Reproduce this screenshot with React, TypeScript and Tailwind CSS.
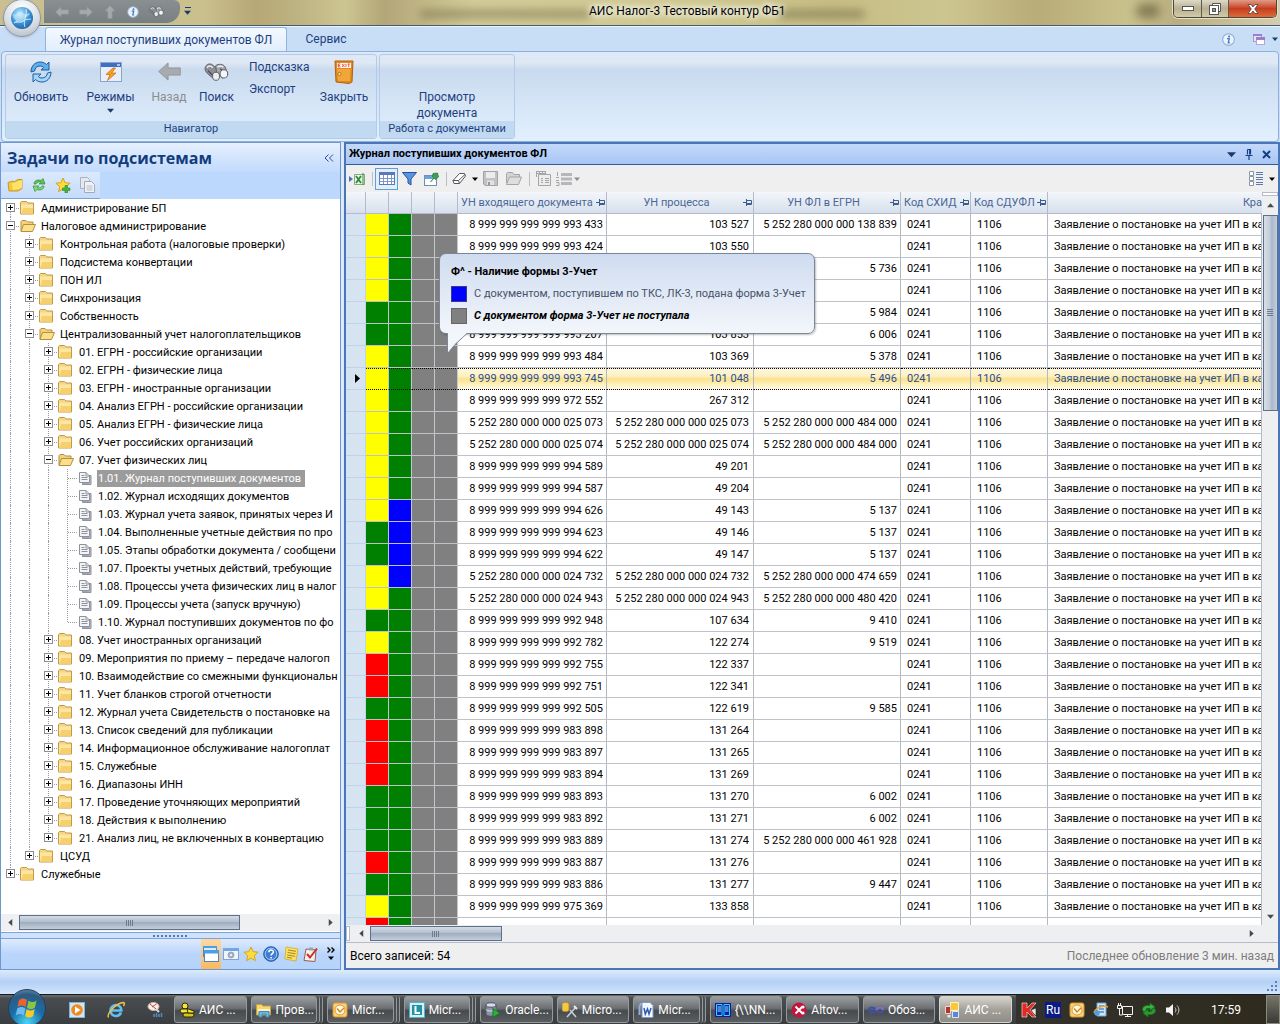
import React from "react";

type P = { children?: React.ReactNode };

/* ---------- small drawing helpers ---------- */

function Svg({ w = 16, h = 16, box, children }: P & { w?: number; h?: number; box?: string }) {
  return (
    <svg width={w} height={h} viewBox={box ?? `0 0 ${w} ${h}`} className="block shrink-0" aria-hidden="true">
      {children}
    </svg>
  );
}

function Caret({ dir = "down", color = "#1b3b6f", size = 7 }: { dir?: "down" | "up" | "left" | "right"; color?: string; size?: number }) {
  const d = { down: "M0 2h8L4 6.5z", up: "M0 6h8L4 1.5z", left: "M6 0v8L1.5 4z", right: "M2 0v8L6.5 4z" }[dir];
  return (
    <Svg w={size} h={size} box="0 0 8 8">
      <path d={d} fill={color} />
    </Svg>
  );
}

function IconButton({ label, className = "", children }: P & { label: string; className?: string }) {
  return (
    <button type="button" aria-label={label} title={label} className={`flex shrink-0 items-center justify-center ${className}`}>
      {children}
    </button>
  );
}

const ArrowShape = ({ dir, fill = "#a4a9ac", size = 14 }: { dir: "left" | "right" | "up"; fill?: string; size?: number }) => {
  const d = {
    left: "M0.5 8 7 2v3.500h8.500v5H7V14z",
    right: "M15.500 8 9 2v3.500H.5v5H9V14z",
    up: "M8 .5 14 7h-3.500v8.500h-5V7H2z",
  }[dir];
  return (
    <Svg w={size} h={size} box="0 0 16 16">
      <path d={d} fill={fill} stroke="#8d9194" strokeWidth=".6" />
    </Svg>
  );
};

const Binoculars = ({ w, h }: { w: number; h: number }) => (
  <Svg w={w} h={h} box="0 0 26 19">
    <path d="M1 5C2 1 6 0 9 2l7 7-5 8C5 13 0 9 1 5z" fill="#8b8f95" stroke="#565a60" strokeWidth=".9" />
    <path d="M12 3c3-2.500 8-2 10 1l3 8-6 4-6-7z" fill="#a3a7ad" stroke="#565a60" strokeWidth=".9" />
    <path d="M3 5c1.500-2.500 4-2.500 6 0M14 4.500c2-2 5-1.500 6 0" stroke="#eceef0" strokeWidth="1.600" fill="none" />
    <path d="M4 8l5 5M17 6l3 3" stroke="#3f4349" strokeWidth="1.200" />
    <ellipse cx="12.500" cy="14" rx="3.700" ry="4.300" fill="#eceef0" stroke="#565a60" />
    <ellipse cx="20.800" cy="11.500" rx="4" ry="4.300" fill="#f5f6f7" stroke="#565a60" />
  </Svg>
);

const InfoBall = ({ size = 13 }: { size?: number }) => (
  <Svg w={size} h={size} box="0 0 14 14">
    <circle cx="7" cy="7" r="6.300" fill="#eaf2fb" stroke="#8fa9cf" strokeWidth="1.100" />
    <circle cx="7.600" cy="3.800" r="1.100" fill="#3f78c4" />
    <path d="M5.500 6h2.300l-1 4.500h1.600" stroke="#3f78c4" strokeWidth="1.400" fill="none" />
  </Svg>
);

const RefreshIcon = () => (
  <Svg w={24} h={24}>
    <path d="M2 12C2 6 6 2 11 2c3 0 5 1 6.500 2.500L20 2v8h-8l2.600-2.600C13.500 6.300 12.500 6 11 6c-3 0-5 2-5.500 5z" fill="#5cb0ec" stroke="#1d5c9e" />
    <path d="M22 12c0 6-4 10-9 10-3 0-5-1-6.500-2.500L4 22v-8h8l-2.600 2.600c1.100 1.100 2.100 1.400 3.600 1.400 3 0 5-2 5.500-5z" fill="#a3d6f8" stroke="#1d5c9e" />
  </Svg>
);

const ModesIcon = () => (
  <Svg w={22} h={20}>
    <rect x=".5" y=".5" width="21" height="19" fill="#e6effa" stroke="#8ba5cf" />
    <path d="M1 1h20v4H1z" fill="#3f6fc4" />
    <path d="M17 2h3v2h-3z" fill="#a9c4f0" />
    <path d="M13 6 6 12.500h4L7.500 18.500 16 11h-4.500L15.500 6z" fill="#f8a21b" stroke="#d4701c" strokeWidth=".8" />
  </Svg>
);

const ExitIcon = () => (
  <Svg w={20} h={24}>
    <path d="M1 1h18l-1 21-3 1.500L2 22z" fill="#e08a1b" stroke="#b2600d" />
    <path d="M3 9h13.500l-.5 12H4z" fill="#f0a63a" />
    <rect x="3" y="3" width="14" height="5" fill="#fff4ec" />
    <path d="M4 4h2.500M4 5.500h2M4 7h2.500M4.200 4v3M8 4l2.500 3M10.500 4 8 7M12 4v3M13.500 4H16M14.700 4v3" stroke="#e0412f" strokeWidth=".8" />
    <circle cx="5.500" cy="14" r="1.600" fill="#fbe08c" stroke="#9b5a10" strokeWidth=".7" />
  </Svg>
);

const Folder = ({ open }: { open?: boolean }) =>
  open ? (
    <Svg w={16} h={14}>
      <path d="M1 12V2.500L2 1.500h4l1.500 1.500H13V5" fill="#f3d27c" stroke="#b58f3d" />
      <path d="M3.500 5.500h12L12.500 12.500H1z" fill="#fbdf8d" stroke="#b58f3d" />
    </Svg>
  ) : (
    <Svg w={15} h={14}>
      <path d="M.5 13V1.500L1.500.5h5L8 2h5.500v11z" fill="#f3d586" stroke="#c49a44" />
      <path d="M1 3.500h12v9H1z" fill="#fce6a2" />
      <path d="M3 7h10v5.500H1.500z" fill="#f6d06c" />
    </Svg>
  );

const DocIcon = () => (
  <Svg w={13} h={13}>
    <path d="M3.500 12.500V11H10V3.500h2v9z" fill="#b9bcc4" stroke="#8e929d" />
    <path d="M.5.500h6.500l3.500 3.500v6.500H.5z" fill="#f3f4f7" stroke="#8e929d" />
    <path d="M7 .5V4h3.500M2.500 3.500h3M2.500 5.500h6M2.500 7.500h6" stroke="#8e929d" fill="none" />
  </Svg>
);

const Star = ({ plus }: { plus?: boolean }) => (
  <Svg w={16} h={16}>
    <path d="m8 1 2.100 4.700 5 .5-3.800 3.400 1.100 5L8 12l-4.400 2.600 1.100-5L.9 6.200l5-.5z" fill="#ffdc3c" stroke="#d9a41a" />
    {plus && <path d="M10 8.500h2.500v2.500H15v2.500h-2.500V16H10v-2.500H7.500V11H10z" fill="#45b53e" stroke="#2c8a28" strokeWidth=".6" />}
  </Svg>
);

const Pin = () => (
  <Svg w={9} h={9}>
    <path d="M0 4.500h3M3.500 1v7M3.500 2.500h5v4h-5M3.500 5.500h5" stroke="#3e5c8c" fill="none" />
  </Svg>
);

/* ---------- title bar and ribbon ---------- */

function TitleBar() {
  return (
    <header className="relative flex h-[26px] shrink-0 border-b border-[#4b5a6b] bg-[linear-gradient(90deg,#c9bf92_0%,#c9c08d_16%,#b7a876_20%,#bdb282_23%,#ccc591_27%,#b3a678_30%,#d2cb98_37%,#cfc88f_55%,#c6bd84_65%,#cdc590_74%,#b8ac78_81%,#c9c18c_88%,#b9ae80_92%,#d3ccb0_100%)]">
      <div className="absolute inset-0 overflow-hidden" aria-hidden="true">
        <div className="absolute left-[420px] top-[10px] h-[8px] w-[170px] bg-[#6a6240]/50 blur-[4px]" />
        <div className="absolute left-[780px] top-[10px] h-[8px] w-[84px] bg-[#6a6240]/55 blur-[4px]" />
        <div className="absolute left-[1136px] top-[4px] h-[14px] w-[24px] rounded-full bg-[#5a5436]/60 blur-[5px]" />
      </div>
      <div className="absolute -top-[1px] left-[3px] z-10 flex size-[38px] items-center justify-center rounded-full border border-[#8b97a6] bg-[radial-gradient(circle_at_50%_25%,#ffffff,#d7dce3_60%,#a9b1bc)] shadow">
        <Svg w={24} h={24}>
          <defs>
            <radialGradient id="orb" cx=".4" cy=".3" r=".8">
              <stop offset="0" stopColor="#c3ecff" />
              <stop offset=".55" stopColor="#3b93d6" />
              <stop offset="1" stopColor="#1c5a9e" />
            </radialGradient>
          </defs>
          <circle cx="12" cy="12" r="11" fill="url(#orb)" />
          <path d="M3 8c3 2 5-3 9-2 2 3 5 2 8 1-1 4-4 3-6 6s-5 1-7 4c-1-4-4-4-4-9z" fill="#d7f2ff" opacity=".55" />
          <path d="M4 17c3-3 6 1 9-2s5-1 8-2M16 3c2 6-4 12-1 18" stroke="#e6f7ff" strokeWidth="1.100" fill="none" opacity=".8" />
        </Svg>
      </div>
      <div className="relative ml-[44px] flex h-[23px] w-[136px] items-center gap-[10px] rounded-br-[14px] rounded-tr-[6px] bg-linear-to-b from-[#8a9091] to-[#787f82] pl-[11px]">
        <IconButton label="Назад"><ArrowShape dir="left" /></IconButton>
        <IconButton label="Вперёд"><ArrowShape dir="right" /></IconButton>
        <IconButton label="Вверх"><ArrowShape dir="up" /></IconButton>
        <IconButton label="Сведения"><InfoBall size={12} /></IconButton>
        <IconButton label="Поиск"><Binoculars w={15} h={11} /></IconButton>
      </div>
      <IconButton label="Настройка панели" className="relative ml-1 h-[22px] flex-col gap-px">
        <span className="h-px w-[6px] bg-[#1b3b6f]" />
        <Caret />
      </IconButton>
      <div className="flex flex-1 justify-center pr-[5px]">
        <h1 className="ml-[178px] flex-1 pl-[220px] text-[12px] leading-[22px] text-black [text-shadow:0_0_6px_#fff,0_0_6px_#fff,0_0_10px_#fff]">
          АИС Налог-3 Тестовый контур ФБ1
        </h1>
      </div>
      <div className="absolute right-[3px] top-0 flex h-[18px] overflow-hidden rounded-b-[5px] border border-t-0 border-[#4c483c] shadow-[0_0_0_1px_#e6e0c6]">
        <IconButton label="Свернуть" className="w-[28px] border-r border-[#5e5a4c] bg-linear-to-b from-[#dfdac9] via-[#b9b092] to-[#d2cba9]">
          <Svg w={12} h={5}><rect x=".5" y=".5" width="11" height="4" fill="#fff" stroke="#555" /></Svg>
        </IconButton>
        <IconButton label="Развернуть" className="w-[27px] border-r border-[#5e5a4c] bg-linear-to-b from-[#dfdac9] via-[#b9b092] to-[#d2cba9]">
          <Svg w={12} h={12}>
            <path d="M3.500.5h8v8h-2v-6h-6z" fill="#fff" stroke="#555" />
            <rect x=".5" y="2.500" width="9" height="9" fill="#fff" stroke="#555" />
            <rect x="3.500" y="5.500" width="3" height="3" fill="#999" stroke="#555" />
          </Svg>
        </IconButton>
        <IconButton label="Закрыть" className="w-[47px] bg-linear-to-b from-[#e09a85] via-[#c63d1e] to-[#dd6a3b]">
          <Svg w={12} h={10}>
            <path d="M1 .5h3l2 2.500L8 .5h3L7.700 5 11 9.500H8L6 7 4 9.500H1L4.300 5z" fill="#fff" stroke="#5b3a33" strokeWidth=".8" />
          </Svg>
        </IconButton>
      </div>
    </header>
  );
}

function RibbonButton({ label, icon, className = "", muted, menu }: { label: string; icon: React.ReactNode; className?: string; muted?: boolean; menu?: boolean }) {
  return (
    <button type="button" className={`flex flex-col items-center ${muted ? "text-[#8d8d8d]" : "text-[#1e3f7f]"} ${className}`}>
      <span className="flex h-[31px] items-center justify-center">{icon}</span>
      <span className="h-[20px] text-[12px] leading-[20px]">{label}</span>
      {menu && <Caret />}
    </button>
  );
}

function Ribbon() {
  return (
    <div className="shrink-0 bg-[#c8def7]">
      <nav className="flex h-[25px] items-end border-t border-[#eaf4ff] text-[12px] text-[#1e3f7f]">
        <button type="button" className="ml-[45px] h-[24px] w-[242px] rounded-t-[3px] border border-b-0 border-[#8fb3e2] bg-linear-to-b from-[#f3f9ff] to-[#e2eefb] leading-[24px]">
          Журнал поступивших документов ФЛ
        </button>
        <button type="button" className="h-[24px] w-[78px] leading-[25px]">Сервис</button>
        <div className="ml-auto flex h-full items-center">
          <IconButton label="О программе" className="mr-[18px]"><InfoBall size={13} /></IconButton>
          <IconButton label="Окна" className="mr-[7px]">
            <Svg w={12} h={11}>
              <rect x=".5" y=".5" width="8" height="7" fill="#e9e4f4" stroke="#a79bc4" />
              <rect x="3.500" y="3.500" width="8" height="7" fill="#fff" stroke="#b6a6d8" />
              <path d="M3 3h9v3H3zM0 0h9v2H0z" fill="#9a7fd0" />
            </Svg>
          </IconButton>
          <IconButton label="Список окон" className="mr-[2px]"><Caret size={6} /></IconButton>
        </div>
      </nav>
      <div className="mx-px flex h-[91px] gap-[2px] rounded-[4px] border border-[#8fb0dc] bg-[linear-gradient(180deg,#dde9f8_0%,#dfe8f4_12%,#c9daee_20%,#d3e3f5_50%,#e2f0fe_100%)] px-[3px] py-[2px]">
        <section className="flex w-[372px] flex-col overflow-hidden rounded-[3px] border border-[#b2cbe9]">
          <div className="flex flex-1 pt-px">
            <RibbonButton label="Обновить" icon={<RefreshIcon />} className="w-[70px]" />
            <RibbonButton label="Режимы" icon={<ModesIcon />} className="w-[69px]" menu />
            <RibbonButton label="Назад" icon={<ArrowShape dir="left" size={23} fill="#a8abae" />} className="w-[48px]" muted />
            <RibbonButton label="Поиск" icon={<Binoculars w={25} h={18} />} className="w-[47px]" />
            <div className="flex w-[78px] flex-col items-start pl-[9px] text-[12px] leading-[22px] text-[#1e3f7f]">
              <button type="button">Подсказка</button>
              <button type="button">Экспорт</button>
            </div>
            <RibbonButton label="Закрыть" icon={<ExitIcon />} className="w-[52px]" />
          </div>
          <h2 className="h-[17px] bg-[#c1d9f1] text-center text-[11px] leading-[15px] text-[#1e3f7f]">Навигатор</h2>
        </section>
        <section className="flex w-[136px] flex-col overflow-hidden rounded-[3px] border border-[#b2cbe9]">
          <div className="flex flex-1 items-end justify-center">
            <button type="button" className="w-[80px] text-[12px] leading-[16px] text-[#1e3f7f]">Просмотр документа</button>
          </div>
          <h2 className="h-[17px] whitespace-nowrap bg-[#c1d9f1] text-center text-[11px] leading-[15px] text-[#1e3f7f]">Работа с документами</h2>
        </section>
      </div>
    </div>
  );
}

/* ---------- task tree ---------- */

type Node = { level: number; text: string; kind: "closed" | "open" | "doc"; last?: boolean; selected?: boolean };

const closed = (level: number, text: string, last = false): Node => ({ level, text, kind: "closed", last });
const opened = (level: number, text: string): Node => ({ level, text, kind: "open" });
const doc = (text: string, last = false, selected = false): Node => ({ level: 3, text, kind: "doc", last, selected });

const tree: Node[] = [
  closed(0, "Администрирование БП"),
  opened(0, "Налоговое администрирование"),
  closed(1, "Контрольная работа (налоговые проверки)"),
  closed(1, "Подсистема конвертации"),
  closed(1, "ПОН ИЛ"),
  closed(1, "Синхронизация"),
  closed(1, "Собственность"),
  opened(1, "Централизованный учет налогоплательщиков"),
  closed(2, "01. ЕГРН - российские организации"),
  closed(2, "02. ЕГРН - физические лица"),
  closed(2, "03. ЕГРН - иностранные организации"),
  closed(2, "04. Анализ ЕГРН - российские организации"),
  closed(2, "05. Анализ ЕГРН - физические лица"),
  closed(2, "06. Учет российских организаций"),
  opened(2, "07. Учет физических лиц"),
  doc("1.01. Журнал поступивших документов", false, true),
  doc("1.02. Журнал исходящих документов"),
  doc("1.03. Журнал учета заявок, принятых через И"),
  doc("1.04. Выполненные учетные действия по про"),
  doc("1.05. Этапы обработки документа / сообщени"),
  doc("1.07. Проекты учетных действий, требующие"),
  doc("1.08. Процессы учета физических лиц в налог"),
  doc("1.09. Процессы учета (запуск вручную)"),
  doc("1.10. Журнал поступивших документов по фо", true),
  closed(2, "08. Учет иностранных организаций"),
  closed(2, "09. Мероприятия по приему – передаче налогоп"),
  closed(2, "10. Взаимодействие со смежными функциональн"),
  closed(2, "11. Учет бланков строгой отчетности"),
  closed(2, "12. Журнал учета Свидетельств о постановке на"),
  closed(2, "13. Список сведений для публикации"),
  closed(2, "14. Информационное обслуживание налогоплат"),
  closed(2, "15. Служебные"),
  closed(2, "16. Диапазоны ИНН"),
  closed(2, "17. Проведение уточняющих мероприятий"),
  closed(2, "18. Действия к выполнению"),
  closed(2, "21. Анализ лиц, не включенных в конвертацию", true),
  closed(1, "ЦСУД", true),
  closed(0, "Служебные", true),
];

function Connector({ node, first }: { node: Node; first: boolean }) {
  const isDoc = node.kind === "doc";
  return (
    <Svg w={19} h={18}>
      <path
        d={`M9.500 ${first ? 9 : 0}V${node.last ? 9 : 18}M${isDoc ? 10 : 15} 9.500H19`}
        stroke="#9a9aa2"
        strokeDasharray="1 1"
        fill="none"
      />
      {!isDoc && (
        <>
          <rect x="5.500" y="4.500" width="8" height="8" fill="#fff" stroke="#8c8c94" />
          <path d={node.kind === "closed" ? "M7 8.500h5M9.500 6v5" : "M7 8.500h5"} stroke="#000" />
        </>
      )}
    </Svg>
  );
}

function TreeRow({ node, first }: { node: Node; first: boolean }) {
  return (
    <li className="flex h-[18px] items-center whitespace-nowrap">
      {Array.from({ length: node.level }, (_, i) => (
        <span key={i} className="flex h-full w-[19px] shrink-0 justify-end">
          <span className="w-[10px] border-l border-dotted border-[#9a9aa2]" />
        </span>
      ))}
      <Connector node={node} first={first} />
      <span className="flex w-[20px] shrink-0">{node.kind === "doc" ? <span className="pl-[2px]"><DocIcon /></span> : <Folder open={node.kind === "open"} />}</span>
      <button type="button" className={`h-[17px] text-[11px] leading-[18px] ${node.selected ? "bg-[#9b9b9b] pl-px pr-[4px] text-white" : "pl-px text-black"}`}>
        {node.text}
      </button>
    </li>
  );
}

function SidePanel() {
  return (
    <aside className="flex w-[341px] shrink-0 flex-col overflow-hidden border border-[#6f97cf] bg-white">
      <div className="flex h-[29px] shrink-0 items-center justify-between bg-linear-to-b from-[#e6f0fe] to-[#c2dafc] pl-[6px] pr-[6px]">
        <h2 className="font-['Open_Sans',sans-serif] text-[16px] font-bold leading-[28px] text-[#123c7c]">Задачи по подсистемам</h2>
        <IconButton label="Свернуть панель">
          <Svg w={10} h={8}><path d="M4.500.5 1 4l3.500 3.500M9 .5 5.500 4 9 7.500" stroke="#26508f" fill="none" /></Svg>
        </IconButton>
      </div>
      <div className="flex h-[27px] shrink-0 bg-[#bdd8fd]">
        <div className="flex w-[99px] items-center gap-2 border-b border-[#7fa2d6] bg-linear-to-b from-[#dbe9fd] to-[#c5dcfb] pl-[6px]">
          <IconButton label="Открыть">
            <Svg>
              <path d="M1 5.500 6 4l1 1 4-2.500h4v9L11 14H2z" fill="#f6c936" stroke="#c9952a" />
              <path d="M5 6.500 15 3v8l-9 2z" fill="#ffe36b" />
            </Svg>
          </IconButton>
          <IconButton label="Обновить">
            <Svg>
              <path d="M3 7c0-3 3-5 7-3.500L12 1.500 14 7H8l2-1.500C8 4.500 5.500 5 5 7z" fill="#5cc255" stroke="#2f8f34" strokeWidth=".7" />
              <path d="M13 9c0 3-3 5-7 3.500l-2 2L2 9h6l-2 1.500c2 1 4.500.5 5-1.500z" fill="#84d977" stroke="#2f8f34" strokeWidth=".7" />
            </Svg>
          </IconButton>
          <IconButton label="В избранное"><Star plus /></IconButton>
          <IconButton label="Копировать">
            <Svg>
              <path d="M1.500.5h7l2 2v9h-9z" fill="#e4e8ef" stroke="#aab2c0" />
              <path d="M5.500 4.500h7l3 3v8h-10z" fill="#f0f2f6" stroke="#a3abba" />
              <path d="M7.500 9h6M7.500 11h6M7.500 13h6" stroke="#b7bdc9" />
            </Svg>
          </IconButton>
        </div>
      </div>
      <ul className="min-h-0 flex-1 overflow-hidden">
        {tree.map((n, i) => (
          <TreeRow key={n.text + i} node={n} first={i === 0} />
        ))}
      </ul>
      <div className="flex h-[17px] shrink-0 items-center bg-[#eef0f2] px-[6px]">
        <Caret dir="left" color="#444a55" />
        <div className="ml-[5px] flex h-[15px] w-[221px] items-center justify-center border border-[#5d6f8c] bg-[linear-gradient(180deg,#d4dbe4,#b3bfce_45%,#9fadc0_50%,#c4cedb)]">
          <span className="h-[6px] w-[8px] bg-[repeating-linear-gradient(90deg,#6d7b90_0_1px,transparent_1px_2px)]" />
        </div>
        <span className="flex-1" />
        <Caret dir="right" color="#444a55" />
      </div>
      <div className="mt-px flex h-[7px] shrink-0 items-center justify-center border-y border-[#7fa2d6] bg-[#cfe2fd]">
        <span className="h-[2px] w-[35px] bg-[repeating-linear-gradient(90deg,#4e79b8_0_2px,transparent_2px_4px)]" />
      </div>
      <div className="flex h-[30px] shrink-0 items-center justify-end bg-linear-to-b from-[#dfebfd] via-[#b9d5fb] to-[#b6d3fb] pr-[2px]">
        <IconButton label="Задачи" className="h-[30px] w-[20px] bg-linear-to-b from-[#fcd9a4] to-[#f9b95f]">
          <Svg>
            <rect x=".5" y=".5" width="13" height="10" fill="#dceafb" stroke="#4a86c8" />
            <rect x="1.500" y="4.500" width="14" height="11" fill="#fff" stroke="#4a86c8" />
            <path d="M1 4h15v3.500H1zM0 0h14v2H0z" fill="#4aa0e4" />
          </Svg>
        </IconButton>
        <IconButton label="Настройки" className="w-[20px]">
          <Svg>
            <rect x=".5" y="2.500" width="15" height="11" fill="#f0f5fc" stroke="#7fa3d4" />
            <path d="M1 3h14v2H1z" fill="#6ba8e8" />
            <circle cx="8" cy="9" r="3" fill="#a8b0c4" stroke="#9aa3ba" />
            <circle cx="8" cy="9" r="1" fill="#fff" />
          </Svg>
        </IconButton>
        <IconButton label="Избранное" className="w-[20px]"><Star /></IconButton>
        <IconButton label="Справка" className="w-[20px]">
          <Svg>
            <circle cx="8" cy="8" r="7.300" fill="#3f7fd2" stroke="#2458a3" />
            <circle cx="8" cy="8" r="5.800" fill="none" stroke="#b9d6f7" strokeWidth=".8" />
            <path d="M5.800 6.300c0-3 4.600-3 4.600-.3 0 1.600-2.300 1.700-2.300 3.500M8.100 11v1.500" stroke="#fff" strokeWidth="1.500" fill="none" />
          </Svg>
        </IconButton>
        <IconButton label="Заметки" className="w-[19px]">
          <Svg>
            <path d="m3 1 12 2-2 12-11-2z" fill="#fbe25c" stroke="#d1ab2a" strokeWidth=".8" />
            <path d="m5 4 8 1.300M4.600 6.500l8 1.300M4.200 9l8 1.300M4 11.300l5 .8" stroke="#a8862a" />
          </Svg>
        </IconButton>
        <IconButton label="Задания" className="w-[21px]">
          <Svg>
            <path d="m3 3 10 1-1 11.500-11-1z" fill="#f3f1ee" stroke="#9b5a4a" />
            <path d="M6 1.500h4v3H6z" fill="#9aa2ad" />
            <path d="m4 8 3 3.500L14 2.500" stroke="#cf2e24" strokeWidth="2" fill="none" />
          </Svg>
        </IconButton>
        <IconButton label="Ещё" className="ml-[3px] w-[14px] flex-col gap-[2px]">
          <Svg w={8} h={6}><path d="M.5.500 3 3 .5 5.500M4.500.5 7 3 4.500 5.500" stroke="#000" strokeWidth="1.400" fill="none" /></Svg>
          <Caret color="#000" size={6} />
        </IconButton>
      </div>
    </aside>
  );
}

/* ---------- document journal ---------- */

type Row = { c: string; b?: boolean; doc: string; proc: string; egrn?: string; current?: boolean; covered?: boolean };

const n9 = (tail: string) => `8 999 999 999 999 ${tail}`;
const n5 = (tail: string) => `5 252 280 000 000 ${tail}`;

const rows: Row[] = [
  { c: "y", doc: n9("993 433"), proc: "103 527", egrn: n5("138 839") },
  { c: "y", doc: n9("993 424"), proc: "103 550" },
  { c: "y", doc: "", proc: "", egrn: "5 736", covered: true },
  { c: "y", doc: "", proc: "", covered: true },
  { c: "g", doc: "", proc: "", egrn: "5 984", covered: true },
  { c: "g", doc: n9("993 207"), proc: "103 853", egrn: "6 006" },
  { c: "y", doc: n9("993 484"), proc: "103 369", egrn: "5 378" },
  { c: "y", doc: n9("993 745"), proc: "101 048", egrn: "5 496", current: true },
  { c: "y", doc: n9("972 552"), proc: "267 312" },
  { c: "y", doc: n5("025 073"), proc: n5("025 073"), egrn: n5("484 000") },
  { c: "y", doc: n5("025 074"), proc: n5("025 074"), egrn: n5("484 000") },
  { c: "y", doc: n9("994 589"), proc: "49 201" },
  { c: "y", doc: n9("994 587"), proc: "49 204" },
  { c: "y", b: true, doc: n9("994 626"), proc: "49 143", egrn: "5 137" },
  { c: "g", b: true, doc: n9("994 623"), proc: "49 146", egrn: "5 137" },
  { c: "g", b: true, doc: n9("994 622"), proc: "49 147", egrn: "5 137" },
  { c: "y", b: true, doc: n5("024 732"), proc: n5("024 732"), egrn: n5("474 659") },
  { c: "y", doc: n5("024 943"), proc: n5("024 943"), egrn: n5("480 420") },
  { c: "g", doc: n9("992 948"), proc: "107 634", egrn: "9 410" },
  { c: "y", doc: n9("992 782"), proc: "122 274", egrn: "9 519" },
  { c: "r", doc: n9("992 755"), proc: "122 337" },
  { c: "r", doc: n9("992 751"), proc: "122 341" },
  { c: "g", doc: n9("992 505"), proc: "122 619", egrn: "9 585" },
  { c: "r", doc: n9("983 898"), proc: "131 264" },
  { c: "r", doc: n9("983 897"), proc: "131 265" },
  { c: "r", doc: n9("983 894"), proc: "131 269" },
  { c: "g", doc: n9("983 893"), proc: "131 270", egrn: "6 002" },
  { c: "g", doc: n9("983 892"), proc: "131 271", egrn: "6 002" },
  { c: "g", doc: n9("983 889"), proc: "131 274", egrn: n5("461 928") },
  { c: "r", doc: n9("983 887"), proc: "131 276" },
  { c: "g", doc: n9("983 886"), proc: "131 277", egrn: "9 447" },
  { c: "y", doc: n9("975 369"), proc: "133 858" },
  { c: "r", doc: "", proc: "" },
];

const fills: Record<string, string> = { y: "bg-[#ffff00]", g: "bg-[#008000]", r: "bg-[#ff0000]" };

function DocRow({ row }: { row: Row }) {
  const line = row.current ? "border-y border-y-black [border-top-style:dotted] [border-bottom-style:dotted]" : "border-b border-b-[#bfc3c9]";
  const mark = `h-[22px] border-r border-r-[#c4c8cc] ${line}`;
  const cell = `h-[22px] overflow-hidden border-r border-r-[#b4b8c0] px-[3px] ${line} ${
    row.current ? "bg-[linear-gradient(180deg,#fdf6de_0%,#fdf0c4_35%,#fbe28c_50%,#fdf0b8_75%,#fdf8e2_100%)] text-[#2a4f8f]" : "bg-white"
  }`;
  const filled = row.doc !== "" || row.covered;
  return (
    <tr>
      <td className="h-[22px] border-b border-r border-[#c3d3e6] bg-[#d6e4f2]">
        {row.current && <span className="flex justify-center pl-[3px]"><Svg w={5} h={9}><path d="M0 0v9l5-4.500z" /></Svg></span>}
      </td>
      <td className={`${mark} ${fills[row.c]}`} />
      <td className={`${mark} ${row.b ? "bg-[#0000ff]" : "bg-[#008000]"}`} />
      <td className={`${mark} bg-[#808080]`} />
      <td className={`${mark} bg-[#808080]`} />
      <td className={`${cell} text-right`}>{row.doc}</td>
      <td className={`${cell} pr-[4px] text-right`}>{row.proc}</td>
      <td className={`${cell} text-right`}>{row.egrn}</td>
      <td className={`${cell} pl-[6px]`}>{filled && "0241"}</td>
      <td className={`${cell} pl-[6px]`}>{filled && "1106"}</td>
      <td className={`${cell} pl-[6px]`}>{filled && "Заявление о постановке на учет ИП в ка"}</td>
    </tr>
  );
}

function HeadCell({ text, align = "justify-center" }: { text: string; align?: string }) {
  return (
    <th className="h-[22px] overflow-hidden border-b border-r border-[#b4bccb] p-0 font-normal text-[#4a6796]">
      <div className="flex items-center pl-[3px] pr-px">
        <span className={`flex flex-1 ${align}`}>{text}</span>
        <Pin />
      </div>
    </th>
  );
}

function Tooltip() {
  return (
    <div role="tooltip" className="absolute left-[93px] top-[61px] w-[376px] whitespace-nowrap rounded-[7px] border border-[#7b8797] bg-linear-to-b from-[#cfdcf0] to-[#f3f6fb] pb-[6px] pl-[11px] pt-[7px] text-[11px] shadow-[1px_1px_2px_rgba(0,0,0,0.25)]">
      <div className="h-[22px] font-bold leading-[22px] text-black">Ф^ - Наличие формы 3-Учет</div>
      <div className="flex h-[22px] items-center text-[#46536b]">
        <span className="mr-[7px] size-[16px] shrink-0 border border-[#3a3a8c] bg-[#0000ff]" />С документом, поступившем по ТКС, ЛК-3, подана форма 3-Учет
      </div>
      <div className="flex h-[22px] items-center font-bold italic text-black">
        <span className="mr-[7px] size-[16px] shrink-0 border border-[#666] bg-[#808080]" />С документом форма 3-Учет не поступала
      </div>
      <div className="absolute left-[7px] top-full">
        <Svg w={24} h={22}>
          <path d="M.5-1V20.500L8 11.500 21-1z" fill="#f3f6fb" />
          <path d="M.5 0V20.500L8 11.500 20 .5" fill="none" stroke="#7b8797" />
        </Svg>
      </div>
    </div>
  );
}

function Separator() {
  return <span className="h-[14px] w-px bg-[#b9bdc4]" />;
}

function Toolbar() {
  return (
    <div className="flex h-[27px] shrink-0 items-center bg-[#efefef] pl-[3px]">
      <IconButton label="Экспорт в Excel">
        <Svg w={17} h={14}>
          <path d="M0 4v6l4-3z" fill="#4b6fb4" />
          <path d="M13 2.500H8L5 5" fill="none" stroke="#5c9a5c" />
          <path d="M5.500 2.500h10v10h-10z" fill="#edf6eb" stroke="#7fae7b" />
          <path d="m7 4 5 7M12 4 7 11" stroke="#2f8a35" strokeWidth="1.800" />
          <path d="M14 1v12" stroke="#2f8a35" />
        </Svg>
      </IconButton>
      <span className="w-[6px]" /><Separator />
      <IconButton label="Таблица" className="ml-[2px] h-[22px] w-[23px] border border-[#5d9fd6] bg-[#e2effb]">
        <Svg w={16} h={13}>
          <rect x=".5" y=".5" width="15" height="12" fill="#fff" stroke="#5b79b8" />
          <path d="M1 1h14v2H1z" fill="#5b79b8" />
          <path d="M1 6.500h14M1 9.500h14M4.500 3v9M8.500 3v9M12.500 3v9" stroke="#7f97c8" />
        </Svg>
      </IconButton>
      <IconButton label="Фильтр" className="ml-[4px]">
        <Svg w={15} h={14}><path d="M.5.500h14L9 7v6L6 11V7z" fill="#5b93e0" stroke="#23539f" /></Svg>
      </IconButton>
      <IconButton label="Закрепить" className="ml-[7px]">
        <Svg w={15} h={14}>
          <rect x=".5" y="3.500" width="12" height="10" fill="#fff" stroke="#6f8fb8" />
          <path d="M1 4h8v3H1z" fill="#6aa3d6" />
          <path d="M9 1.500 13.500 1l1 4-3 2.500-3-3z" fill="#3fa04e" stroke="#23733a" strokeWidth=".7" />
          <path d="m10 6-3.500 4" stroke="#23733a" />
        </Svg>
      </IconButton>
      <span className="w-[7px]" /><Separator />
      <IconButton label="Очистить" className="ml-[5px]">
        <Svg w={15} h={13}>
          <path d="M1 8.500 7.500 1.500h5L13.500 4 7.500 11.500H2z" fill="#fff" stroke="#55585e" />
          <path d="M1 8.500h5.500L13 2.500M6.500 8.500l1 3" stroke="#55585e" fill="none" />
        </Svg>
      </IconButton>
      <IconButton label="Варианты очистки" className="ml-[5px]"><Caret color="#000" size={6} /></IconButton>
      <IconButton label="Сохранить" className="ml-[5px]">
        <Svg w={15} h={15}>
          <path d="M.5.500h14v14H2l-1.500-1.500z" fill="#c0c2c5" stroke="#a0a2a6" />
          <path d="M3 1h9v6H3z" fill="#ececec" /><path d="M4 9.500h7V14H4z" fill="#e2e2e2" /><path d="M5 11h2v3H5z" fill="#96989c" />
        </Svg>
      </IconButton>
      <IconButton label="Открыть" className="ml-[8px]">
        <Svg w={16} h={13}>
          <path d="M.5 11V1.500L1.500.5h5L8 2.500h5.500V5" fill="#d3d3d3" stroke="#a3a5a8" />
          <path d="M3.500 5h12l-3 7.500h-12z" fill="#dedede" stroke="#a3a5a8" />
        </Svg>
      </IconButton>
      <span className="w-[7px]" /><Separator />
      <IconButton label="Свойства" className="ml-[6px]">
        <Svg w={16} h={15}>
          <path d="M2.500 3.500h12v11h-12z" fill="#ececec" stroke="#a3a5a8" />
          <path d="M0 .5h10M0 2.500h10M.5 0v6M3.500 0v4M6.500 0v4M9.500 0v4M5 7.500h2M9 7.500h4M5 9.500h2M9 9.500h4M5 11.500h2M9 11.500h4" stroke="#a3a5a8" />
        </Svg>
      </IconButton>
      <IconButton label="Нумерация" className="ml-[4px]">
        <Svg w={16} h={14}>
          <path d="M5 1h11v3H5zM5 5.500h11v3H5zM5 10h11v3H5z" fill="#b5b7ba" />
          <path d="M1.500 0v4M0 5.500h3M0 8.500h3M0 10.500h3v3H0" stroke="#a3a5a8" fill="none" />
        </Svg>
      </IconButton>
      <IconButton label="Варианты нумерации" className="ml-[2px]"><Caret color="#8b8d90" size={6} /></IconButton>
      <IconButton label="Вид" className="ml-auto">
        <Svg w={14} h={16}>
          <path d="M.5.500h4v4h-4zM.5 5.500h4v4h-4zM.5 10.500h4v4h-4z" fill="#fff" stroke="#8b95a8" />
          <path d="M7 1.500h7M7 3.500h7M7 6.500h7M7 8.500h7M7 11.500h7M7 13.500h7" stroke="#5d79ad" />
        </Svg>
      </IconButton>
      <IconButton label="Варианты вида" className="ml-[6px] mr-[3px]"><Caret color="#000" size={6} /></IconButton>
    </div>
  );
}

function Journal() {
  return (
    <main className="flex min-w-0 flex-1 flex-col overflow-hidden border-2 border-[#4a76b8] bg-[#efefef]">
      <div className="flex h-[21px] shrink-0 items-center border-b border-[#2f5a9c] bg-linear-to-b from-[#c3d9fb] to-[#a9c6f4] pl-[3px] pr-[7px]">
        <h2 className="text-[11px] font-bold text-black">Журнал поступивших документов ФЛ</h2>
        <div className="ml-auto flex items-center gap-[9px]">
          <IconButton label="Меню окна"><Caret size={9} /></IconButton>
          <IconButton label="Закрепить окно">
            <Svg w={8} h={11}><path d="M2.500.5h3v5M2.500.5v5M4.700.5v5M.5 6.500h7M4 7v4" stroke="#123f85" strokeWidth="1.200" fill="none" /></Svg>
          </IconButton>
          <IconButton label="Закрыть окно">
            <Svg w={9} h={9}><path d="m1 1 7 7M8 1 1 8" stroke="#123f85" strokeWidth="2" /></Svg>
          </IconButton>
        </div>
      </div>
      <Toolbar />
      <div className="relative flex min-h-0 flex-1">
        <div className="min-w-0 flex-1 overflow-hidden bg-white">
          <table className="w-full table-fixed border-separate border-spacing-0 whitespace-nowrap text-[11px] leading-[18px] text-black">
            <colgroup>
              <col className="w-[20px]" />
              <col className="w-[23px]" />
              <col className="w-[23px]" />
              <col className="w-[23px]" />
              <col className="w-[23px]" />
              <col className="w-[149px]" />
              <col className="w-[147px]" />
              <col className="w-[147px]" />
              <col className="w-[70px]" />
              <col className="w-[77px]" />
              <col />
            </colgroup>
            <thead className="bg-linear-to-b from-[#f3f6fa] to-[#d5dfec]">
              <tr>
                {["Указатель", "Состояние", "Проверка", "Признак", "Форма"].map((t) => (
                  <th key={t} aria-label={t} className="h-[22px] border-b border-r border-[#b4bccb] p-0" />
                ))}
                <HeadCell text="УН входящего документа" align="justify-start" />
                <HeadCell text="УН процесса" />
                <HeadCell text="УН ФЛ в ЕГРН" />
                <HeadCell text="Код СХИД" align="justify-start" />
                <HeadCell text="Код СДУФЛ" align="justify-start" />
                <th className="overflow-hidden border-b border-[#b4bccb] p-0 text-right font-normal text-[#4a6796]">Кра</th>
              </tr>
            </thead>
            <tbody>
              {rows.map((r, i) => (
                <DocRow key={i} row={r} />
              ))}
            </tbody>
          </table>
        </div>
        <div className="flex w-[16px] shrink-0 flex-col items-center bg-[#eeeff1]">
          <span className="h-[4px] w-full border border-[#b4bccb] bg-white" />
          <span className="flex h-[19px] items-center"><Caret dir="up" color="#444a55" /></span>
          <div className="flex h-[196px] w-[15px] items-center justify-center border border-[#5d6f8c] bg-[linear-gradient(90deg,#d8dfe8,#c3ccda_45%,#aab8cb_60%,#c4cedb)]">
            <span className="h-[8px] w-[6px] bg-[repeating-linear-gradient(180deg,#6d7b90_0_1px,transparent_1px_2px)]" />
          </div>
          <span className="mt-auto flex h-[18px] items-center"><Caret dir="down" color="#444a55" /></span>
        </div>
        <Tooltip />
      </div>
      <div className="flex h-[17px] shrink-0 items-center bg-[#eeeff1]">
        <span className="h-[15px] w-[4px] border border-[#b4bccb] bg-white" />
        <span className="ml-[8px]"><Caret dir="left" color="#444a55" /></span>
        <div className="ml-[5px] flex h-[15px] w-[132px] items-center justify-center border border-[#5d6f8c] bg-[linear-gradient(180deg,#d4dbe4,#b3bfce_45%,#9fadc0_50%,#c4cedb)]">
          <span className="h-[6px] w-[8px] bg-[repeating-linear-gradient(90deg,#6d7b90_0_1px,transparent_1px_2px)]" />
        </div>
        <span className="ml-auto mr-[23px]"><Caret dir="right" color="#444a55" /></span>
      </div>
      <footer className="flex h-[26px] shrink-0 items-center justify-between border-t border-[#b4bccb] px-[4px] text-[12px]">
        <span className="text-black">Всего записей: 54</span>
        <span className="text-[#7d7d7d]">Последнее обновление 3 мин. назад</span>
      </footer>
    </main>
  );
}

/* ---------- desktop task bar ---------- */

const OutlookIcon = () => (
  <Svg>
    <rect x="1" y="1" width="14" height="14" rx="2" fill="#f8cf7c" stroke="#d9982c" />
    <circle cx="8" cy="8" r="5" fill="#fff7e2" stroke="#e09a26" />
    <path d="M5 6.500 8 10l4-4" stroke="#c9851d" strokeWidth="1.300" fill="none" />
  </Svg>
);

const taskIcons: Record<string, React.ReactNode> = {
  key: (
    <Svg>
      <circle cx="6" cy="4" r="3" fill="#f5e53a" stroke="#2c2a08" />
      <rect x="1" y="7" width="9" height="4" rx="2" fill="#f5e53a" stroke="#2c2a08" />
      <rect x="4" y="11" width="11" height="4" rx="2" fill="#d9c61d" stroke="#2c2a08" />
      <path d="M8 6.500 15 9v2H9z" fill="#f5e53a" stroke="#2c2a08" />
    </Svg>
  ),
  explorer: (
    <Svg>
      <path d="M.5 13V2.500h5L7 4h7.500v9z" fill="#f6d774" stroke="#c9a040" />
      <path d="M2 7h12v3H2z" fill="#fff2bf" />
      <path d="M3 15V9.500h10V15h-3v-3H6v3z" fill="#6db9e8" stroke="#3f88bf" />
    </Svg>
  ),
  outlook: <OutlookIcon />,
  lync: (
    <Svg>
      <rect x=".5" y=".5" width="15" height="15" fill="#d7eef2" stroke="#4fb4c6" />
      <path d="M3 3h10v10H3z" fill="#2292a8" />
      <path d="M6.500 4v7h4.500" stroke="#fff" strokeWidth="2" fill="none" />
    </Svg>
  ),
  oracle: (
    <Svg>
      <path d="M1 3v9c0 3 10 3 10 0V3z" fill="#8c93a8" stroke="#4d5268" />
      <ellipse cx="6" cy="3" rx="5" ry="2.200" fill="#d8dce8" stroke="#4d5268" />
      <path d="M1 7.500c0 2 10 2 10 0" stroke="#e2e5ee" fill="none" />
      <path d="M8 6.500v9l7-4.500z" fill="#2fae3b" stroke="#17752a" />
    </Svg>
  ),
  tools: (
    <Svg>
      <path d="M0 2c0-2 7-2 7 0v6c0 2-7 2-7 0z" fill="#f2c84b" stroke="#b88c20" />
      <path d="M5 15 14 5M14 15 8 8" stroke="#c6ccd4" strokeWidth="1.600" />
      <path d="m12 4 3 3" stroke="#e8ecf0" strokeWidth="2" />
    </Svg>
  ),
  word: (
    <Svg>
      <path d="M4 .5h8l3 3v12H4z" fill="#f4f7fc" stroke="#7c98c8" />
      <path d="M1 5c2-2 2-3 2-4M1.500 5v8" stroke="#8fb0e4" strokeWidth="2" fill="none" />
      <path d="m6 6 1.300 6L9.500 7l1.500 5 2-6" stroke="#2f5cb0" strokeWidth="1.500" fill="none" />
    </Svg>
  ),
  far: (
    <Svg>
      <path d="M0 1h16v14H0z" fill="#0b1aa8" />
      <path d="M1.500 2.500h5.500v11H1.500zM9 2.500h5.500v11H9z" fill="none" stroke="#35d8f0" />
      <path d="M2.500 5h3.500M2.500 7h3.500M2.500 9h3.500M10 5h3.500M10 7h3.500M10 9h3.500" stroke="#8ff0ff" />
    </Svg>
  ),
  altova: (
    <Svg>
      <circle cx="8" cy="8" r="7.500" fill="#c4143c" />
      <path d="m4.500 4.500 7 7M11.500 4.500l-7 7" stroke="#fff" strokeWidth="2" />
      <circle cx="12" cy="5" r="1.600" fill="#fff" /><circle cx="12" cy="11" r="1.600" fill="#fff" />
    </Svg>
  ),
  vs: (
    <Svg>
      <path d="M8 8C6 4.500 1 5 1 8s5 3.500 7 0 7-3 7 0-5 3.500-7 0z" fill="none" stroke="#3c52a8" strokeWidth="2" />
      <path d="M8 8c2-3.500 7-3 7 0" fill="none" stroke="#8c6cc0" strokeWidth="2" />
    </Svg>
  ),
  app: (
    <Svg>
      <path d="M6.500.5h8v8h-8z" fill="#f7c838" stroke="#fff3c4" />
      <path d="M1.500 4.500h5v7h-5z" fill="#b3372c" stroke="#f3d4d0" />
      <path d="M8.500 9.500h6v6h-6z" fill="#5a86d8" stroke="#dce6f8" />
      <path d="M3.500 13h3v2.500h-3z" fill="#e9e9e9" />
    </Svg>
  ),
};

const tasks = [
  { icon: "key", text: "АИС ..." },
  { icon: "explorer", text: "Пров...", stack: true },
  { icon: "outlook", text: "Micr...", stack: true },
  { icon: "lync", text: "Micr...", stack: true },
  { icon: "oracle", text: "Oracle..." },
  { icon: "tools", text: "Micro..." },
  { icon: "word", text: "Micr...", stack: true },
  { icon: "far", text: "{\\\\NN..." },
  { icon: "altova", text: "Altov..." },
  { icon: "vs", text: "Обоз..." },
  { icon: "app", text: "АИС ...", active: true },
];

function TaskBar() {
  return (
    <footer className="flex h-[30px] shrink-0 border-t border-[#17191c] bg-[linear-gradient(180deg,#6a6d6f_0%,#4a4d4f_12%,#3a3d3f_100%)] text-[12px] text-white">
      <div className="relative w-[56px] shrink-0">
        <button type="button" aria-label="Пуск" className="absolute -top-[6px] left-[8px] size-[38px] rounded-full border border-[#20405c] bg-[radial-gradient(circle_at_50%_90%,#49d5f5,#1c6ca6_45%,#2c5b82_75%,#7fa3bf)]">
          <Svg w={36} h={36}>
            <path d="M10 10c3-2 5-2 8 0l-1.500 7c-3-2-5-2-8 0z" fill="#f0622b" />
            <path d="M19.500 10.500c3 2 5 2 8 0L26 17.500c-3 2-5 2-8 0z" fill="#8cc63e" />
            <path d="M8.200 18.500c3-2 5-2 8 0L14.700 25.500c-3-2-5-2-8 0z" fill="#6dbcf2" />
            <path d="M17.700 19c3 2 5 2 8 0L24.200 26c-3 2-5 2-8 0z" fill="#fbc926" />
          </Svg>
        </button>
      </div>
      <div className="flex w-[118px] shrink-0 items-center gap-[22px] pl-[13px]">
        <IconButton label="Проигрыватель">
          <Svg>
            <rect x=".5" y=".5" width="15" height="15" fill="#cfe6f5" stroke="#7fb2d6" />
            <circle cx="8" cy="8" r="5.800" fill="#f18a1f" />
            <path d="M6 4.500v7L11.500 8z" fill="#fff" />
          </Svg>
        </IconButton>
        <IconButton label="Браузер">
          <Svg w={18} h={18}>
            <path d="M14 11.500C13 14 11 15 9 15c-3.500 0-5.500-2.500-5.500-5.500S6 4 9 4s5.500 2.500 5.300 5.500H5" fill="none" stroke="#5fc0f3" strokeWidth="2.600" />
            <path d="M1.500 16.500C-.5 13 8 3 16 1.500c2 0 1.500 2 .5 3.500" fill="none" stroke="#f4c43c" strokeWidth="1.400" />
          </Svg>
        </IconButton>
        <IconButton label="Монитор">
          <Svg>
            <ellipse cx="6.500" cy="4.500" rx="5.500" ry="4" fill="#f5f1ee" stroke="#d8b0a8" />
            <path d="m3 2 6 5M9.500 2 5 5" stroke="#c24c3d" />
            <path d="m9 7 3 3" stroke="#d8d8d8" strokeWidth="2" />
            <path d="M7 15v-3M9.500 15v-4M12 15v-3M14.500 15v-4" stroke="#4f8fc0" strokeWidth="1.500" />
          </Svg>
        </IconButton>
      </div>
      <div className="grid min-w-0 flex-1 grid-cols-11">
        {tasks.map((t, i) => (
          <div key={i} className="flex min-w-0 py-px pr-[4px]">
            <button
              type="button"
              className={`flex min-w-0 flex-1 items-center gap-[4px] overflow-hidden whitespace-nowrap rounded-[3px] border pl-[4px] ${
                t.active
                  ? "border-[#d5d5d0] bg-linear-to-b from-[#d6d4cc] via-[#a3a199] to-[#8f8d86]"
                  : "border-[#96999b] bg-[linear-gradient(180deg,#9a9d9f_0%,#6d7072_45%,#484b4d_55%,#5b5e60_100%)]"
              }`}
            >
              {taskIcons[t.icon]}
              <span>{t.text}</span>
            </button>
            {t.stack && (
              <>
                <span className="w-[3px] rounded-r-[3px] border-r border-[#96999b] bg-[#4b4e50]" />
                <span className="w-[3px] rounded-r-[3px] border-r border-[#96999b] bg-[#4b4e50]" />
              </>
            )}
          </div>
        ))}
      </div>
      <div className="flex w-[264px] shrink-0 items-center bg-linear-to-r from-[#33322d] to-[#2e2a1c] pl-[5px]">
        <div className="flex gap-[8px]">
          <Svg>
            <path d="M1 1h5v5l5-5h4L9 8l6 7h-4L6 10v5H1z" fill="#e02a26" stroke="#f5d5d0" strokeWidth=".7" />
            <path d="m10 8 5-2v8l-3-3z" fill="#e9e9e9" stroke="#222" strokeWidth=".6" />
          </Svg>
          <span className="flex h-[16px] w-[16px] items-center justify-center bg-[#0a1a86] text-[12px] leading-[16px]">Ru</span>
          <OutlookIcon />
          <Svg>
            <path d="M4 1h9v13H4z" fill="#cfe6f7" stroke="#6ea6d2" />
            <path d="M6 4h5M6 7h5M6 10h5" stroke="#4f8fc8" strokeWidth="1.400" />
            <path d="M1 11c1-5 9-8 14-6" fill="none" stroke="#f0a030" strokeWidth="1.500" />
            <circle cx="4" cy="11" r="2.800" fill="#4f9fe0" />
          </Svg>
          <Svg>
            <path d="M5.500 4.500h10v8h-10zM8 14.500h6M10.500 12.500v2" fill="none" stroke="#f2f2f2" />
            <path d="M.5 3.500h4v3h-4zM1.500 1v2M3.500 1v2M2.500 7v6h3" fill="none" stroke="#f2f2f2" />
          </Svg>
          <Svg>
            <path d="M3 10C-1 6 4 2.500 9 3.500V1l5 4-5 4V6.500C6 6 4 7 5.500 9z" fill="#3cb043" stroke="#1a6e22" />
            <path d="M13 6c4 4-1 7.500-6 6.500V15l-5-4 5-4v2.500c3 .5 5-.5 3.500-2.500z" fill="#2a9a33" stroke="#1a6e22" />
          </Svg>
          <Svg>
            <path d="M1 5.500h3L8 2v12l-4-3.500H1z" fill="#f4f4f4" />
            <path d="M10 5.500c1.300 1.500 1.300 3.500 0 5M12 3.500c2.500 2.500 2.500 6.500 0 9" stroke="#cfcfcf" fill="none" />
          </Svg>
        </div>
        <time className="ml-auto mr-[25px]">17:59</time>
        <button type="button" aria-label="Показать рабочий стол" className="h-full w-[14px] border border-[#8a8a80] bg-linear-to-b from-[#77766c] to-[#3b3a33]" />
      </div>
    </footer>
  );
}

export default function App() {
  return (
    <div className="flex h-screen min-h-[640px] flex-col overflow-hidden bg-[#c8def7] font-['Roboto',sans-serif]">
      <TitleBar />
      <Ribbon />
      <div className="flex min-h-0 flex-1 gap-[3px] bg-[#dce9fa]">
        <SidePanel />
        <Journal />
      </div>
      <div className="flex h-[24px] shrink-0 items-end justify-end bg-linear-to-b from-[#dcebfd] via-[#b4d0f5] to-[#d3e6fb] p-[2px]">
        <Svg w={11} h={11}>
          <path d="M8 0h2v2H8zM4 4h2v2H4zM8 4h2v2H8zM0 8h2v2H0zM4 8h2v2H4zM8 8h2v2H8z" fill="#5a80ba" />
        </Svg>
      </div>
      <TaskBar />
    </div>
  );
}
